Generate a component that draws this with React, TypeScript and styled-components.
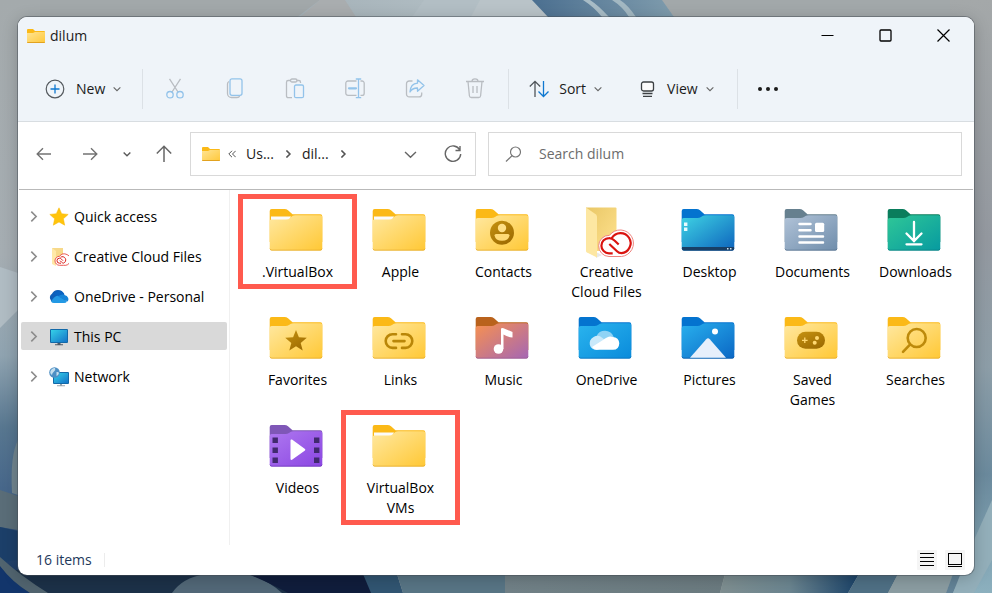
import React from "react";
import styled, { createGlobalStyle } from "styled-components";

const GlobalStyle = createGlobalStyle`
  *, *::before, *::after { box-sizing: border-box; }
  body { margin: 0; }
  body, button, input { font-family: "Open Sans", "Noto Sans", sans-serif; font-size: 14px; line-height: 20px; }
  button { border: 0; padding: 0; background: none; color: inherit; cursor: default; }
  svg { display: block; flex: none; }
`;

/* ---------- layout ---------- */

const Desktop = styled.div`
  position: relative;
  display: flex;
  min-height: 100vh;
  padding: 17px 18px 18px;
  background: #a0a7aa;
  overflow: hidden;
`;

const WallpaperSvg = styled.svg`
  position: absolute;
  inset: 0;
  width: 100%;
  height: 100%;
`;

const DefsSvg = styled.svg`
  position: absolute;
  width: 0;
  height: 0;
`;

const Window = styled.main`
  position: relative;
  flex: 1;
  min-width: 0;
  display: flex;
  flex-direction: column;
  border-radius: 9px;
  background: #fff;
  color: #1b1b1b;
  overflow: hidden;
  box-shadow: 0 0 0 1px rgba(70, 78, 86, 0.5), 0 3px 16px rgba(0, 0, 0, 0.22);
`;

const Chrome = styled.header`
  background: #eff4f9;
  border-bottom: 1px solid #d8dde1;
`;

const TitleBar = styled.div`
  display: flex;
  align-items: center;
  height: 37px;
  padding: 0 2px 0 9px;
`;

const Title = styled.h1`
  flex: 1;
  margin: 0 0 0 5px;
  font-size: 14px;
  font-weight: 400;
`;

const CaptionButton = styled.button`
  display: grid;
  place-items: center;
  width: 58px;
  height: 36px;
`;

const Toolbar = styled.div`
  display: flex;
  align-items: center;
  height: 67px;
  padding: 2px 0 0 19px;
`;

const MenuButton = styled.button<{ $gap: number; $before?: number }>`
  display: flex;
  align-items: center;
  height: 40px;
  padding: 0 8px;
  gap: ${(p) => p.$gap}px;
  margin-left: ${(p) => p.$before ?? 0}px;
`;

const MenuLabel = styled.span`
  display: flex;
  align-items: center;
  gap: 8px;
`;

const ToolButton = styled.button`
  display: grid;
  place-items: center;
  width: 60px;
  height: 40px;
`;

const Divider = styled.span<{ $before: number; $after: number }>`
  width: 1px;
  height: 40px;
  background: #dce1e6;
  margin-left: ${(p) => p.$before}px;
  margin-right: ${(p) => p.$after}px;
`;

const MoreButton = styled.button`
  display: grid;
  place-items: center;
  width: 36px;
  height: 40px;
`;

const NavBar = styled.nav`
  display: flex;
  align-items: center;
  height: 68px;
  margin: 0 1px;
  padding: 0 11px 3px 2px;
  border-bottom: 1px solid #b9b9b9;
`;

const NavButton = styled.button<{ $narrow?: boolean }>`
  display: grid;
  place-items: center;
  width: ${(p) => (p.$narrow ? 28 : 46)}px;
  height: 40px;
`;

const AddressBar = styled.div`
  display: flex;
  align-items: center;
  flex: 0 0 286px;
  height: 44px;
  margin: 0 12px 0 3px;
  padding: 0 13px 0 11px;
  border: 1px solid #d9d9d9;
`;

const Crumbs = styled.div`
  display: flex;
  align-items: center;
  gap: 10px;
  flex: 1;
  margin-left: 8px;
`;

const AddressActions = styled.div`
  display: flex;
  align-items: center;
  gap: 27px;
`;

const SearchBox = styled.label`
  display: flex;
  align-items: center;
  flex: 1;
  min-width: 0;
  height: 44px;
  padding: 0 16px;
  gap: 17px;
  border: 1px solid #d9d9d9;
`;

const SearchInput = styled.input`
  flex: 1;
  min-width: 0;
  padding: 0;
  border: 0;
  outline: 0;
  background: none;
  color: #1b1b1b;
  &::placeholder { color: #6c6c6c; opacity: 1; }
`;

const Body = styled.div`
  display: flex;
  flex: 1;
`;

const Sidebar = styled.aside`
  flex: 0 0 212px;
  padding: 12px 2px 0 3px;
  border-right: 1px solid #f0f0f0;
`;

const Tree = styled.ul`
  display: flex;
  flex-direction: column;
  gap: 12px;
  margin: 0;
  padding: 0;
  list-style: none;
`;

const TreeItem = styled.button<{ $active?: boolean }>`
  display: flex;
  align-items: center;
  width: 100%;
  height: 28px;
  padding: 1px 0 0 7px;
  border-radius: 2px;
  color: #000;
  white-space: nowrap;
  background: ${(p) => (p.$active ? "#d9d9d9" : "transparent")};
`;

const TreeIcon = styled.span`
  margin: 0 5px 0 10px;
`;

const Grid = styled.section`
  flex: 1;
  display: grid;
  grid-template-columns: repeat(auto-fill, 103px);
  align-content: start;
  align-items: start;
  row-gap: 8px;
  padding: 12px 0 0 16px;
`;

const Tile = styled.button<{ $marked?: boolean }>`
  position: relative;
  display: flex;
  flex-direction: column;
  align-items: center;
  gap: 2px;
  color: #000;
  &::after {
    content: "";
    display: ${(p) => (p.$marked ? "block" : "none")};
    position: absolute;
    inset: -8px -8px -7px;
    border: 5px solid #ff5a4e;
  }
`;

const TileLabel = styled.span`
  max-width: 80px;
  text-align: center;
`;

const StatusBar = styled.footer`
  display: flex;
  align-items: center;
  height: 30px;
  padding: 0 9px 0 18px;
`;

const Count = styled.span`
  padding-right: 12px;
  color: #1e395b;
`;

const StatusDivider = styled.span`
  width: 1px;
  height: 14px;
  margin-right: auto;
  background: #ececec;
`;

const ViewButton = styled.button`
  display: grid;
  place-items: center;
  width: 20px;
  height: 20px;
  margin-left: 8px;
  border-radius: 1px;
  background: #f5f5f5;
`;

/* ---------- wallpaper ---------- */

const Wallpaper = () => (
  <WallpaperSvg viewBox="0 0 992 593" preserveAspectRatio="none" aria-hidden="true">
    <defs>
      <linearGradient id="wl" x1="0" y1="0" x2="0" y2="1">
        <stop offset="0" stopColor="#a4aaac" /><stop offset=".43" stopColor="#a5adb2" />
        <stop offset=".6" stopColor="#8fa3b0" /><stop offset=".72" stopColor="#587790" />
        <stop offset=".83" stopColor="#46668a" /><stop offset="1" stopColor="#12305c" />
      </linearGradient>
      <linearGradient id="wr" x1="0" y1="0" x2="0" y2="1">
        <stop offset="0" stopColor="#a4a8a9" /><stop offset=".4" stopColor="#9499a0" />
        <stop offset=".62" stopColor="#8d9ea8" /><stop offset=".8" stopColor="#6b8a9d" />
        <stop offset="1" stopColor="#8cb0be" />
      </linearGradient>
      <linearGradient id="wt" x1="0" y1="0" x2="1" y2="0">
        <stop offset="0" stopColor="#a3b0b7" /><stop offset="1" stopColor="#b9c5ca" />
      </linearGradient>
      <linearGradient id="wb" x1="0" y1="0" x2="1" y2="0">
        <stop offset="0" stopColor="#4b6f90" /><stop offset="1" stopColor="#7f9cad" />
      </linearGradient>
      <linearGradient id="wd" x1="0" y1="0" x2="1" y2="0">
        <stop offset="0" stopColor="#7f8f91" /><stop offset=".5" stopColor="#6b8590" /><stop offset="1" stopColor="#1a4268" />
      </linearGradient>
      <linearGradient id="wm" x1="0" y1="0" x2="1" y2="0">
        <stop offset="0" stopColor="#718187" /><stop offset="1" stopColor="#6b7b80" />
      </linearGradient>
    </defs>
    <rect width="992" height="593" fill="#a2a8aa" />
    <rect width="40" height="593" fill="url(#wl)" />
    <rect x="950" width="42" height="593" fill="url(#wr)" />
    {/* upper petals */}
    <path d="M320 0H556L540 17 280 30Z" fill="url(#wt)" />
    <path d="M320 0H345L356 17H300Z" fill="#a9adaf" />
    <path d="M412 17 424 0H478L470 17Z" fill="#b2bec4" />
    <path d="M480 0H530L550 17H471Z" fill="#b9c3c8" />
    <path d="M532 0H662L674 17H548Z" fill="url(#wb)" />
    <path d="M583 0Q594 7 602 17H609Q598 5 590 0Z" fill="#a8bcc6" />
    <path d="M612 0Q623 7 629 17H636Q628 5 620 0Z" fill="#a3b8c2" />
    {/* left petals */}
    <path d="M0 267 18 273V310Q10 318 0 328Z" fill="#b0bcc3" />
    <path d="M18 440Q10 455 12 493L18 495Z" fill="#71858f" />
    <path d="M0 490 18 496V530L0 527Z" fill="#5a6d78" />
    <path d="M0 527 18 531V560Q6 560 0 566Z" fill="#1c3f69" />
    {/* lower petals */}
    <rect y="570" width="375" height="23" fill="#1c3148" />
    <path d="M0 566V593H30Q14 582 0 566Z" fill="#12356b" />
    <path d="M0 557Q22 577 48 593H30Q12 582 0 566Z" fill="#51646f" />
    <path d="M172 593Q182 578 205 574H248Q268 580 282 593Z" fill="#526878" />
    <path d="M248 574H365L372 593H288Q272 584 248 574Z" fill="#101d3c" />
    <path d="M363 574H397L403 593H371Z" fill="#315572" />
    <path d="M397 574H505V593H403Z" fill="#587585" />
    <path d="M505 574H725L720 593H505Z" fill="url(#wm)" />
    <path d="M725 574H859L848 593H720Z" fill="url(#wd)" />
    <path d="M859 574H898L888 593H848Z" fill="#4f7085" />
    <path d="M898 574H953L946 593H888Z" fill="#8b9da2" />
    <path d="M953 574H962L953 593H946Z" fill="#638397" />
    <path d="M992 500V560L974 593H953L974 540Z" fill="#93afba" />
  </WallpaperSvg>
);

/* ---------- small icons ---------- */

const Chevron = ({ dir, size = 8, color = "#666", w = 1.1 }: { dir: "down" | "right"; size?: number; color?: string; w?: number }) => (
  <svg width={size} height={size} viewBox="0 0 10 10" fill="none" stroke={color} strokeWidth={(w * 10) / size}>
    <path d={dir === "down" ? "M.8 3 5 7.2 9.2 3" : "M3 .6 7.4 5 3 9.4"} />
  </svg>
);

const MiniFolder = ({ id }: { id: string }) => (
  <svg width="18" height="16" viewBox="0 0 18 16">
    <defs>
      <linearGradient id={id} x1="0" y1="0" x2="1" y2="1">
        <stop offset="0" stopColor="#ffe493" /><stop offset="1" stopColor="#ffc83a" />
      </linearGradient>
    </defs>
    <path d="M0 2a1 1 0 0 1 1-1h5l2 2h9a1 1 0 0 1 1 1v10H0Z" fill="#fbb917" />
    <path d="M0 5h6l2-1h10v10a1 1 0 0 1-1 1H1a1 1 0 0 1-1-1Z" fill={`url(#${id})`} />
    <path d="M0 14h18a1 1 0 0 1-1 1H1a1 1 0 0 1-1-1Z" fill="#e2a21f" />
  </svg>
);

const GREY = "#b9bdc2";
const BLUE = "#93c3ea";

const tools: { name: string; art: React.ReactNode }[] = [
  {
    name: "Cut",
    art: (
      <>
        <path d="M4.500 0.800 13 14M15.500 .8 7 14" stroke={GREY} />
        <circle cx="5" cy="16.700" r="3.200" stroke={BLUE} /><circle cx="15" cy="16.700" r="3.200" stroke={BLUE} />
      </>
    ),
  },
  {
    name: "Copy",
    art: (
      <>
        <path d="M4 3.500Q2.500 4.200 2.500 6V15.500a4 4 0 0 0 4 4H12q2 0 2.700-1.500" stroke={GREY} />
        <rect x="5" y=".8" width="12" height="16.500" rx="2" stroke={BLUE} />
      </>
    ),
  },
  {
    name: "Paste",
    art: (
      <>
        <path d="M6 2.500H3.200a1.700 1.700 0 0 0-1.700 1.700V18a1.700 1.700 0 0 0 1.700 1.700H7M11.500 2.500h2.300a1.700 1.700 0 0 1 1.700 1.700V5" stroke={GREY} />
        <rect x="5.500" y="1" width="6.500" height="3" rx="1.500" stroke={GREY} />
        <rect x="9.500" y="7" width="9" height="12.700" rx="1.500" stroke={BLUE} />
      </>
    ),
  },
  {
    name: "Rename",
    art: (
      <>
        <path d="M11.500 3H3a2.200 2.200 0 0 0-2.200 2.200v10A2.200 2.200 0 0 0 3 17.400h8.500M15.500 3H17a2.200 2.200 0 0 1 2.200 2.200v10a2.200 2.200 0 0 1-2.200 2.200h-1.500" stroke={GREY} />
        <path d="M10.800 1h5.400M10.800 19.700h5.400M13.500 1v18.700" stroke={BLUE} />
        <path d="M4 10.300h7" stroke={BLUE} strokeWidth="2.200" strokeLinecap="round" />
      </>
    ),
  },
  {
    name: "Share",
    art: (
      <>
        <path d="M7.500 3H4.200A2.700 2.700 0 0 0 1.500 5.700V16.200a2.700 2.700 0 0 0 2.700 2.700H14a2.700 2.700 0 0 0 2.700-2.700V14.500" stroke={GREY} />
        <path d="M12.500 1.800 19 7.500l-6.500 5.700V10Q7.500 9.800 5 14 5.500 5.600 12.500 5.200Z" stroke={BLUE} strokeLinejoin="round" />
      </>
    ),
  },
  {
    name: "Delete",
    art: (
      <path d="M1 3.500h18M7 3.300a3 2.500 0 0 1 6 0M3 3.500l1.400 14.200a2 2 0 0 0 2 1.800h7.200a2 2 0 0 0 2-1.800L17 3.500M8 8v7M12 8v7" stroke={GREY} />
    ),
  },
];

/* ---------- sidebar icons ---------- */

const SidebarArt = {
  star: <path d="M10 .8 12.700 6.700 19.200 7.400 14.400 11.800 15.700 18.200 10 15 4.300 18.200 5.600 11.800 .8 7.400 7.300 6.700Z" fill="#ffc40c" stroke="#f9b905" strokeWidth=".5" />,
  cc: (
    <>
      <path d="M3 1h11v15H3Z" fill="#f7d98a" />
      <path d="M3 1l4 3v15l-4-2Z" fill="#ffe9a8" />
      <path d="M10.500 18.300a4.500 4.500 0 0 1 0-9A6 5.700 0 1 1 14.500 18.300Z" fill="#fff" stroke="#e4322c" strokeWidth=".8" />
      <path d="M12 16.200H10.500a2.500 2.500 0 0 1 0-5q1 0 2 1l1.500 1.500M11.500 10.300a3.300 3.300 0 1 1 3 5.800q-1 0-2-1l-1.500-1.500" fill="none" stroke="#dc1c16" strokeWidth="1" />
    </>
  ),
  cloud: (
    <>
      <path d="M4.500 15A4.500 4.500 0 0 1 3 6.800 6.500 6.500 0 0 1 15 7l2 8Z" fill="#0f5fb8" />
      <path d="M5 7.500A6 6 0 0 1 15.500 7.300L12 10Z" fill="#0a64c2" />
      <path d="M2 14.500Q6 8 10 9l8 5.500q-1 1.500-3 1.500H5q-2 0-3-1.500Z" fill="#2399e4" />
      <path d="M9 9.500Q13 6 16 8.300a4 4 0 0 1 2.700 6.200Z" fill="#1684d8" />
    </>
  ),
  pc: (
    <>
      <rect x="1" y="2" width="18" height="14" rx="1" fill="#1269a8" />
      <rect x="2" y="3" width="16" height="12" fill="url(#screen)" />
      <path d="M8.500 16h3v1.500h-3ZM6 17.300h8v1H6Z" fill="#4e5a66" />
    </>
  ),
  network: (
    <>
      <rect x="4" y="5" width="16" height="12" rx="1" fill="#1269a8" />
      <rect x="5" y="6" width="14" height="10" fill="url(#screen)" />
      <path d="M11 17h2v1.500h-2ZM8 18.300h8v1H8Z" fill="#9aa4ac" />
      <circle cx="5.500" cy="5.500" r="5.300" fill="#4d8fc4" />
      <path d="M2 3q2-2.500 4-2 1 2-1 3.500T3 8Q0 6 2 3ZM7.500 5q2-.5 2.500 1-.5 2.500-2.500 3Z" fill="#c4deee" />
    </>
  ),
};

const places: { name: string; icon: keyof typeof SidebarArt; active?: boolean }[] = [
  { name: "Quick access", icon: "star" },
  { name: "Creative Cloud Files", icon: "cc" },
  { name: "OneDrive - Personal", icon: "cloud" },
  { name: "This PC", icon: "pc", active: true },
  { name: "Network", icon: "network" },
];

/* ---------- folders ---------- */

type Skin = { tab: string; from: string; to: string; edge: string };
const yellow: Skin = { tab: "#fbb917", from: "#ffe8a0", to: "#ffc835", edge: "#e3a92b" };

const STAR = "M27 20 29.900 27.300 37.800 27.800 31.700 32.900 33.700 40.500 27 36.300 20.300 40.500 22.300 32.900 16.200 27.800 24.100 27.300Z";

type Entry = { name: string; skin?: Skin; plain?: boolean; cloud?: boolean; marked?: boolean; art?: React.ReactNode };

const entries: Entry[] = [
  { name: ".VirtualBox", plain: true, marked: true },
  { name: "Apple", plain: true },
  {
    name: "Contacts",
    art: (
      <>
        <circle cx="27" cy="30.700" r="12" fill="url(#bronze)" />
        <circle cx="27" cy="26" r="4.200" fill="#ffdf85" />
        <path d="M21 32H33a1.500 1.500 0 0 1 1.500 1.500Q33.500 38.800 27 38.800T19.500 33.500A1.500 1.500 0 0 1 21 32Z" fill="#ffda75" />
      </>
    ),
  },
  { name: "Creative Cloud Files", cloud: true },
  {
    name: "Desktop",
    skin: { tab: "#0473cf", from: "#3fd4e4", to: "#0d63bd", edge: "#0b57a4" },
    art: (
      <>
        <path d="M1 45H53v1.500a2 2 0 0 1-2 2H3a2 2 0 0 1-2-2Z" fill="#183f66" />
        <path d="M3 20.500h3.400v3.400H3ZM3 25.500h3.400v3.400H3Z" fill="#e8fbff" />
        <path d="M46 46h1.500v1.500H46ZM49 46h1.500v1.500H49Z" fill="#d6e6f2" />
      </>
    ),
  },
  {
    name: "Documents",
    skin: { tab: "#66808f", from: "#b1c3d8", to: "#6f8dab", edge: "#56718c" },
    art: (
      <>
        <path d="M15.500 22H26.500M15.500 28.200H26.500M15.500 34.400H39M15.500 40.600H39" stroke="#fff" strokeWidth="2.500" strokeLinecap="round" />
        <rect x="31" y="20.800" width="9.200" height="9.200" rx="1.500" fill="#fff" />
      </>
    ),
  },
  {
    name: "Downloads",
    skin: { tab: "#0a7d5c", from: "#2fc797", to: "#079aa0", edge: "#0a7c80" },
    art: <path d="M27 20V38M19.500 31.500 27 39 34.500 31.500M19.500 42.300H34.500" stroke="#fff" strokeWidth="2.300" strokeLinecap="round" fill="none" />,
  },
  { name: "Favorites", art: <path d={STAR} fill="url(#bronze)" /> },
  {
    name: "Links",
    art: <path d="M24 24.300H20.500a6.800 6.800 0 0 0 0 13.600H24M30 24.300H33.500a6.800 6.800 0 0 1 0 13.600H30M21.500 31.100H32.500" stroke="#b98608" strokeWidth="2.600" strokeLinecap="round" fill="none" />,
  },
  {
    name: "Music",
    skin: { tab: "#b9621c", from: "#f79150", to: "#a566b4", edge: "#9a5a8e" },
    art: (
      <>
        <circle cx="23.500" cy="39" r="4.800" fill="#fff" />
        <path d="M26 18.500Q27 17.500 28.500 18.200L37.500 22v5.500Q32 27 28.500 24.500V39H26Z" fill="#fff" />
      </>
    ),
  },
  {
    name: "OneDrive",
    skin: { tab: "#0474cf", from: "#2ab4ee", to: "#0a8bdb", edge: "#0a6fb9" },
    art: (
      <>
        <path d="M19 39.800A6.500 6.500 0 0 1 18.500 26.300 9.300 9.300 0 0 1 35.500 26.500L38 33Z" fill="#8fd3f5" />
        <path d="M18.500 39.800A6.600 6.600 0 0 1 16 27Q20 24 24.500 28L34 36Z" fill="#c9e9fa" />
        <path d="M18.500 39.800q-3-.4-4.500-2.800l11-7q6-5 9.500-3 6.500.500 6.800 6.200-.300 6.600-6.300 6.600Z" fill="#fff" />
      </>
    ),
  },
  {
    name: "Pictures",
    skin: { tab: "#0473cf", from: "#28b0ee", to: "#0b67c4", edge: "#0b59a6" },
    art: (
      <>
        <path d="M9 47.700 25.200 29.200a2.400 2.400 0 0 1 3.600 0L45 47.700Z" fill="#e6effb" />
        <circle cx="34" cy="21.500" r="3" fill="#fff" />
      </>
    ),
  },
  {
    name: "Saved Games",
    art: (
      <>
        <rect x="13" y="21.800" width="28" height="17" rx="8.500" fill="url(#bronze)" />
        <path d="M18 30.300h5.600M20.800 27.500v5.600" stroke="#ffd871" strokeWidth="1.300" />
        <circle cx="33" cy="28" r="2" fill="#ffd871" /><circle cx="30.700" cy="32.700" r="2" fill="#ffd871" />
      </>
    ),
  },
  {
    name: "Searches",
    art: <path d="M23.200 34.300 16 41.800M38.700 28a9 9 0 1 1-18 0 9 9 0 0 1 18 0Z" stroke="#bd8a0b" strokeWidth="2.600" strokeLinecap="round" fill="none" />,
  },
  {
    name: "Videos",
    skin: { tab: "#7f57b7", from: "#ae78f0", to: "#8b46e2", edge: "#6d35b8" },
    art: (
      <>
        <path d="M21.500 22.500a1 1 0 0 1 1.500-.9L36 31a1 1 0 0 1 0 1.400L23 41.800a1 1 0 0 1-1.500-.9Z" fill="#fff" />
        <path d="M3.500 19.500h5.400v5.400H3.500ZM3.500 29.500h5.400v5.400H3.500ZM3.500 39.500h5.400v5.400H3.500ZM45 19.500h5.400v5.400H45ZM45 29.500h5.400v5.400H45ZM45 39.500h5.400v5.400H45Z" fill="#41296f" />
      </>
    ),
  },
  { name: "VirtualBox VMs", plain: true, marked: true },
];

const SharedDefs = () => (
  <DefsSvg aria-hidden="true">
    <defs>
      <linearGradient id="screen" x1="0" y1="0" x2="1" y2="1">
        <stop offset="0" stopColor="#35d1e8" /><stop offset="1" stopColor="#1474c8" />
      </linearGradient>
      <linearGradient id="bronze" x1="0" y1="0" x2="0.700" y2="1">
        <stop offset="0" stopColor="#c69210" /><stop offset="1" stopColor="#9e6c02" />
      </linearGradient>
    </defs>
  </DefsSvg>
);

const FolderIcon = ({ entry, id }: { entry: Entry; id: string }) => {
  const skin = entry.skin ?? yellow;
  if (entry.cloud) {
    return (
      <svg width="57" height="58" viewBox="0 0 57 58" fill="none" aria-hidden="true">
        <defs>
          <linearGradient id={id} x1="0" y1="0" x2="1" y2="1">
            <stop offset="0" stopColor="#e9c766" /><stop offset="1" stopColor="#ffe28f" />
          </linearGradient>
        </defs>
        <path d="M8 5.500H37.500a1 1 0 0 1 1 1V48a1 1 0 0 1-1 1H8Z" fill={`url(#${id})`} />
        <path d="M18 50 24 53 18 56Z" fill="#e8e8e8" />
        <path d="M8 5.500 18 12.500Q19 13.500 19 15V55.500L9 50.500Q8 50 8 49Z" fill="#fde7a2" />
        <path d="M31 54.500A10.500 10.500 0 1 1 31.500 33.300 13.300 13.300 0 1 1 43.500 54.500Z" fill="#fff" stroke="#ee8580" strokeWidth="1" />
        <path
          d="M34.700 51.300H31A7.600 7.600 0 0 1 31 36.100Q34 36 36.500 38.500L40.700 42.500M33.800 36A10.100 10.100 0 1 1 43.500 51.200Q41 51.200 39 49.200L31.300 42"
          stroke="#da1410"
          strokeWidth="2.200"
        />
      </svg>
    );
  }
  return (
    <svg width="57" height="58" viewBox="0 0 57 58" fill="none" aria-hidden="true">
      <defs>
        <linearGradient id={id} x1="0" y1="0" x2="1" y2="1">
          <stop offset="0" stopColor={skin.from} /><stop offset="1" stopColor={skin.to} />
        </linearGradient>
      </defs>
      <path d="M.7 9a2 2 0 0 1 2-2H15.500Q17.500 7 19 8.300L23.500 12.300H51.300a2 2 0 0 1 2 2V40H.7Z" fill={skin.tab} />
      {entry.plain && <path d="M2 14.500H22L20 19H2Z" fill="#fbfbfb" />}
      <path
        d={
          entry.plain
            ? "M.7 19a1.500 1.500 0 0 1 1.500-1.500H17Q19.500 17.500 21 16L22 15Q23.500 13.300 26 13.300H51.300a2 2 0 0 1 2 2V46.500a2 2 0 0 1-2 2H2.700a2 2 0 0 1-2-2Z"
            : "M.7 18a2 2 0 0 1 2-2H16.500Q18.500 16 20 15L21.500 14Q22.700 13.300 25 13.300H51.300a2 2 0 0 1 2 2V46.500a2 2 0 0 1-2 2H2.700a2 2 0 0 1-2-2Z"
        }
        fill={`url(#${id})`}
      />
      <path d="M.7 46a2 2 0 0 0 2 1.700H51.300a2 2 0 0 0 2-1.700V46.500a2 2 0 0 1-2 2H2.700a2 2 0 0 1-2-2Z" fill={skin.edge} />
      {entry.art}
    </svg>
  );
};

/* ---------- page ---------- */

export default function App() {
  return (
    <>
      <GlobalStyle />
      <SharedDefs />
      <Desktop>
        <Wallpaper />
        <Window>
          <Chrome>
            <TitleBar>
              <MiniFolder id="mini-title" />
              <Title>dilum</Title>
              <CaptionButton aria-label="Minimize">
                <svg width="13" height="13"><path d="M.5 6.500h12" stroke="#000" /></svg>
              </CaptionButton>
              <CaptionButton aria-label="Maximize">
                <svg width="13" height="13" fill="none"><rect x="1" y="1" width="11" height="11" rx="1" stroke="#000" strokeWidth="1.300" /></svg>
              </CaptionButton>
              <CaptionButton aria-label="Close">
                <svg width="13" height="13"><path d="M.5.5l12 12M12.500.5l-12 12" stroke="#000" strokeWidth="1.200" /></svg>
              </CaptionButton>
            </TitleBar>
            <Toolbar>
              <MenuButton $gap={11}>
                <svg width="20" height="20" fill="none">
                  <circle cx="10" cy="10" r="8.800" stroke="#555a5f" strokeWidth="1.200" />
                  <path d="M10 5.500v9M5.500 10h9" stroke="#0f78d0" strokeWidth="1.300" />
                </svg>
                <MenuLabel>New <Chevron dir="down" /></MenuLabel>
              </MenuButton>
              <Divider $before={13} $after={2} />
              {tools.map((t) => (
                <ToolButton key={t.name} aria-label={t.name} disabled>
                  <svg width="20" height="21" viewBox="0 0 20 21" fill="none" strokeWidth="1.300">{t.art}</svg>
                </ToolButton>
              ))}
              <Divider $before={3} $after={12} />
              <MenuButton $gap={10}>
                <svg width="20" height="18" fill="none" strokeWidth="1.300">
                  <path d="M6 17V1.500M.8 6.500 6 1.300 11.200 6.500" stroke="#50555a" />
                  <path d="M14.500 1V16.300M9.500 11.500 14.500 16.500 19.500 11.500" stroke="#0f78d0" />
                </svg>
                <MenuLabel>Sort <Chevron dir="down" /></MenuLabel>
              </MenuButton>
              <MenuButton $gap={12} $before={22}>
                <svg width="15" height="18" fill="none" stroke="#3c4043" strokeWidth="1.300">
                  <rect x="1.500" y="2" width="12" height="9" rx="2" fill="#fbfbfb" />
                  <path d="M2.500 13.500h10M3 16.300h9" />
                </svg>
                <MenuLabel>View <Chevron dir="down" /></MenuLabel>
              </MenuButton>
              <Divider $before={15} $after={12} />
              <MoreButton aria-label="See more">
                <svg width="20" height="4" fill="#1b1b1b"><circle cx="2" cy="2" r="2" /><circle cx="10" cy="2" r="2" /><circle cx="18" cy="2" r="2" /></svg>
              </MoreButton>
            </Toolbar>
          </Chrome>

          <NavBar aria-label="Navigation">
            <NavButton aria-label="Back">
              <svg width="16" height="14" fill="none" stroke="#737373" strokeWidth="1.400"><path d="M15 7H1.500M7 1.200 1.200 7 7 12.800" /></svg>
            </NavButton>
            <NavButton aria-label="Forward">
              <svg width="16" height="14" fill="none" stroke="#737373" strokeWidth="1.400"><path d="M1 7H14.500M9 1.200 14.800 7 9 12.800" /></svg>
            </NavButton>
            <NavButton aria-label="Recent locations" $narrow><Chevron dir="down" w={1.4} color="#5c5c5c" /></NavButton>
            <NavButton aria-label="Up">
              <svg width="16" height="18" fill="none" stroke="#666" strokeWidth="1.500"><path d="M8 17V1.500M.8 8.500 8 1.300 15.200 8.500" /></svg>
            </NavButton>
            <AddressBar>
              <MiniFolder id="mini-address" />
              <Crumbs>
                <svg width="8" height="8" fill="none" stroke="#555"><path d="M4 .8.8 4 4 7.200M7.700.8 4.500 4 7.700 7.200" /></svg>
                <button>Us...</button>
                <Chevron dir="right" w={1.6} color="#555" />
                <button>dil...</button>
                <Chevron dir="right" w={1.6} color="#555" />
              </Crumbs>
              <AddressActions>
                <button aria-label="Previous locations"><Chevron dir="down" size={13} w={1.4} /></button>
                <button aria-label="Refresh">
                  <svg width="18" height="18" fill="none" stroke="#666" strokeWidth="1.400"><path d="M15.800 5A7.700 7.700 0 1 0 16.700 9M16 1V5.500H11.500" /></svg>
                </button>
              </AddressActions>
            </AddressBar>
            <SearchBox>
              <svg width="17" height="17" fill="none" stroke="#777" strokeWidth="1.200"><circle cx="10.500" cy="6" r="5" /><path d="M7 9.700 1 15.500" /></svg>
              <SearchInput type="text" placeholder="Search dilum" aria-label="Search dilum" />
            </SearchBox>
          </NavBar>

          <Body>
            <Sidebar>
              <Tree>
                {places.map((p) => (
                  <li key={p.name}>
                    <TreeItem $active={p.active}>
                      <Chevron dir="right" size={11} w={1.6} color="#8c8c8c" />
                      <TreeIcon><svg width="20" height="20" viewBox="0 0 20 20">{SidebarArt[p.icon]}</svg></TreeIcon>
                      {p.name}
                    </TreeItem>
                  </li>
                ))}
              </Tree>
            </Sidebar>
            <Grid aria-label="Files">
              {entries.map((e, i) => (
                <Tile key={e.name} $marked={e.marked}>
                  <FolderIcon entry={e} id={`folder-${i}`} />
                  <TileLabel>{e.name}</TileLabel>
                </Tile>
              ))}
            </Grid>
          </Body>

          <StatusBar>
            <Count>16 items</Count>
            <StatusDivider />
            <ViewButton aria-label="Details view">
              <svg width="14" height="14" stroke="#000"><path d="M0 .5h14M0 4.500h14M0 8.500h14M0 12.500h14" /></svg>
            </ViewButton>
            <ViewButton aria-label="Large icons view">
              <svg width="14" height="14" fill="none" stroke="#000"><rect x=".5" y=".5" width="13" height="11" /><path d="M0 13.500h14" /></svg>
            </ViewButton>
          </StatusBar>
        </Window>
      </Desktop>
    </>
  );
}
